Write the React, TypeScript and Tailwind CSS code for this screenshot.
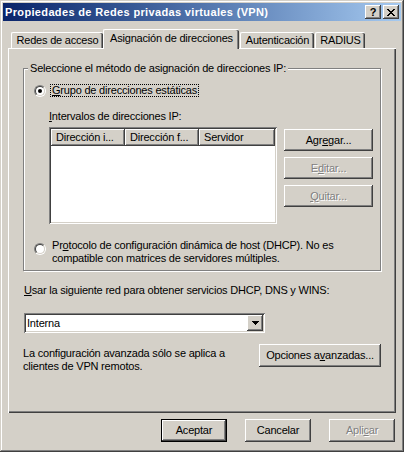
import React from "react";

// classic 3D edges
const raised = "shadow-[inset_-1px_-1px_#404040,inset_1px_1px_#fff,inset_-2px_-2px_#808080]";
const sunken = "shadow-[inset_1px_1px_#808080,inset_-1px_-1px_#fff,inset_2px_2px_#404040,inset_-2px_-2px_#d4d0c8]";
const disabledText = "text-[#808080] [text-shadow:1px_1px_0_#fff]";

function Btn({
  children,
  className = "",
  disabled = false,
  isDefault = false,
}: {
  children: React.ReactNode;
  className?: string;
  disabled?: boolean;
  isDefault?: boolean;
}) {
  if (isDefault) {
    return (
      <div className={`border border-black bg-[#d4d0c8] ${className}`}>
        <div className={`w-full h-full flex items-center justify-center ${raised}`}>{children}</div>
      </div>
    );
  }
  return (
    <div
      className={`bg-[#d4d0c8] flex items-center justify-center ${raised} ${disabled ? disabledText : ""} ${className}`}
    >
      {children}
    </div>
  );
}

function Radio({ checked }: { checked?: boolean }) {
  return (
    <div className="w-[12px] h-[12px] rounded-full border border-t-[#808080] border-l-[#808080] border-b-white border-r-white shrink-0">
      <div className="w-[10px] h-[10px] rounded-full border border-t-[#404040] border-l-[#404040] border-b-[#d4d0c8] border-r-[#d4d0c8] bg-white flex items-center justify-center">
        {checked && <div className="w-[4px] h-[4px] rounded-full bg-black" />}
      </div>
    </div>
  );
}

function Tab({ label, selected, className = "" }: { label: string; selected?: boolean; className?: string }) {
  if (selected) {
    return (
      <div
        className={`relative z-10 -mb-px h-[20px] bg-[#d4d0c8] border-t border-l border-white rounded-t-[2px] shadow-[inset_-1px_0_#404040,inset_-2px_0_#808080] flex justify-center pt-[2px] ${className}`}
      >
        {label}
      </div>
    );
  }
  return (
    <div
      className={`h-[16px] border-t border-l border-white rounded-t-[2px] shadow-[inset_-1px_0_#404040,inset_-2px_0_#808080] flex justify-center pt-[1px] ${className}`}
    >
      {label}
    </div>
  );
}

export default function App() {
  return (
    <div className="w-[404px] h-[452px] bg-[#d4d0c8] p-[3px] flex flex-col text-[11px] leading-[13px] tracking-[-0.2px] text-black font-['Liberation_Sans',Arial,sans-serif] shadow-[inset_-1px_-1px_#404040,inset_1px_1px_#d4d0c8,inset_-2px_-2px_#808080,inset_2px_2px_#fff] select-none">
      {/* title bar */}
      <div className="h-[18px] flex items-center pl-[2px] pr-[2px] bg-linear-to-r from-[#0a246a] to-[#a6caf0]">
        <span className="font-bold text-white text-[11px] tracking-[0.35px]">
          Propiedades de Redes privadas virtuales (VPN)
        </span>
        <div className="ml-auto flex gap-[2px]">
          <div className={`w-[16px] h-[14px] bg-[#d4d0c8] flex items-center justify-center font-bold text-[11px] ${raised}`}>
            ?
          </div>
          <div className={`w-[16px] h-[14px] bg-[#d4d0c8] flex items-center justify-center ${raised}`}>
            <svg width="8" height="7" viewBox="0 0 8 7" shapeRendering="crispEdges">
              <path d="M0 0h2v1h-2zM6 0h2v1h-2zM1 1h2v1h-2zM5 1h2v1h-2zM2 2h4v1h-4zM3 3h2v1h-2zM2 4h4v1h-4zM1 5h2v1h-2zM5 5h2v1h-2zM0 6h2v1h-2zM6 6h2v1h-2z" fill="#000" />
            </svg>
          </div>
        </div>
      </div>

      {/* tabs */}
      <div className="mt-[8px] h-[19px] flex items-end pl-[8px]">
        <Tab label="Redes de acceso" className="w-[92px]" />
        <Tab label="Asignación de direcciones" selected className="w-[136px]" />
        <Tab label="Autenticación" className="w-[74px] ml-[1px]" />
        <Tab label="RADIUS" className="w-[50px] ml-[1px]" />
      </div>

      {/* tab panel */}
      <div className="ml-[5px] w-[388px] h-[365px] border-t border-l border-white shadow-[inset_-1px_-1px_#404040,inset_-2px_-2px_#808080] pl-[14px] pt-[13px]">
        <fieldset className="w-[358px] border border-[#808080] shadow-[inset_1px_1px_#fff,1px_1px_#fff] pb-[5px]">
          <legend className="ml-[4px] px-[2px] bg-[#d4d0c8]">Seleccione el método de asignación de direcciones IP:</legend>

          <div className="mt-[9px] pl-[10px] flex items-center h-[13px]">
            <Radio checked />
            <span className="ml-[4px] border border-dotted border-black px-[1px] leading-[11px]">
              <u>G</u>rupo de direcciones estáticas
            </span>
          </div>

          <div className="pl-[25px] mt-[13px]">
            <u>I</u>ntervalos de direcciones IP:
          </div>

          <div className="pl-[25px] mt-[4px] flex">
            <div className={`w-[228px] h-[97px] bg-white p-[2px] ${sunken}`}>
              <div className="flex h-[17px]">
                <div className={`w-[74px] bg-[#d4d0c8] pl-[5px] flex items-center ${raised}`}>Dirección i...</div>
                <div className={`w-[74px] bg-[#d4d0c8] pl-[5px] flex items-center ${raised}`}>Dirección f...</div>
                <div className={`w-[76px] bg-[#d4d0c8] pl-[5px] flex items-center ${raised}`}>Servidor</div>
              </div>
            </div>
            <div className="ml-[7px] mt-[2px] flex flex-col gap-[6px]">
              <Btn className="w-[89px] h-[22px]">
                <span>
                  Agr<u>e</u>gar...
                </span>
              </Btn>
              <Btn className="w-[89px] h-[22px]" disabled>
                <span>
                  E<u>d</u>itar...
                </span>
              </Btn>
              <Btn className="w-[89px] h-[22px]" disabled>
                <span>
                  <u>Q</u>uitar...
                </span>
              </Btn>
            </div>
          </div>

          <div className="mt-[15px] pl-[10px] flex items-start">
            <div className="mt-[4px]">
              <Radio />
            </div>
            <div className="ml-[5px] pl-[1px]">
              Pr<u>o</u>tocolo de configuración dinámica de host (DHCP). No es
              <br />
              compatible con matrices de servidores múltiples.
            </div>
          </div>
        </fieldset>

        <div className="mt-[13px] pl-[1px]">
          <u>U</u>sar la siguiente red para obtener servicios DHCP, DNS y WINS:
        </div>

        <div className={`mt-[16px] ml-[1px] w-[241px] h-[20px] bg-white p-[2px] flex items-center ${sunken}`}>
          <span className="pl-[1px] flex-1">Interna</span>
          <div className={`w-[16px] h-[16px] bg-[#d4d0c8] flex items-center justify-center ${raised}`}>
            <svg width="7" height="4" viewBox="0 0 7 4" shapeRendering="crispEdges">
              <path d="M0 0h7v1h-7zM1 1h5v1h-5zM2 2h3v1h-3zM3 3h1v1h-1z" fill="#000" />
            </svg>
          </div>
        </div>

        <div className="mt-[11px] flex items-start w-[358px]">
          <div className="mt-[3px]">
            La configuración avanzada sólo se aplica a
            <br />
            clientes de VPN remotos.
          </div>
          <Btn className="ml-auto w-[122px] h-[23px]">
            <span>
              Opciones a<u>v</u>anzadas...
            </span>
          </Btn>
        </div>
      </div>

      {/* dialog buttons */}
      <div className="ml-[5px] w-[388px] mt-[6px] flex justify-end gap-[18px] pr-[1px]">
        <Btn className="w-[66px] h-[23px]" isDefault>
          Aceptar
        </Btn>
        <Btn className="w-[66px] h-[23px]">Cancelar</Btn>
        <Btn className="w-[66px] h-[23px]" disabled>
          <span>
            Apli<u>c</u>ar
          </span>
        </Btn>
      </div>
    </div>
  );
}
